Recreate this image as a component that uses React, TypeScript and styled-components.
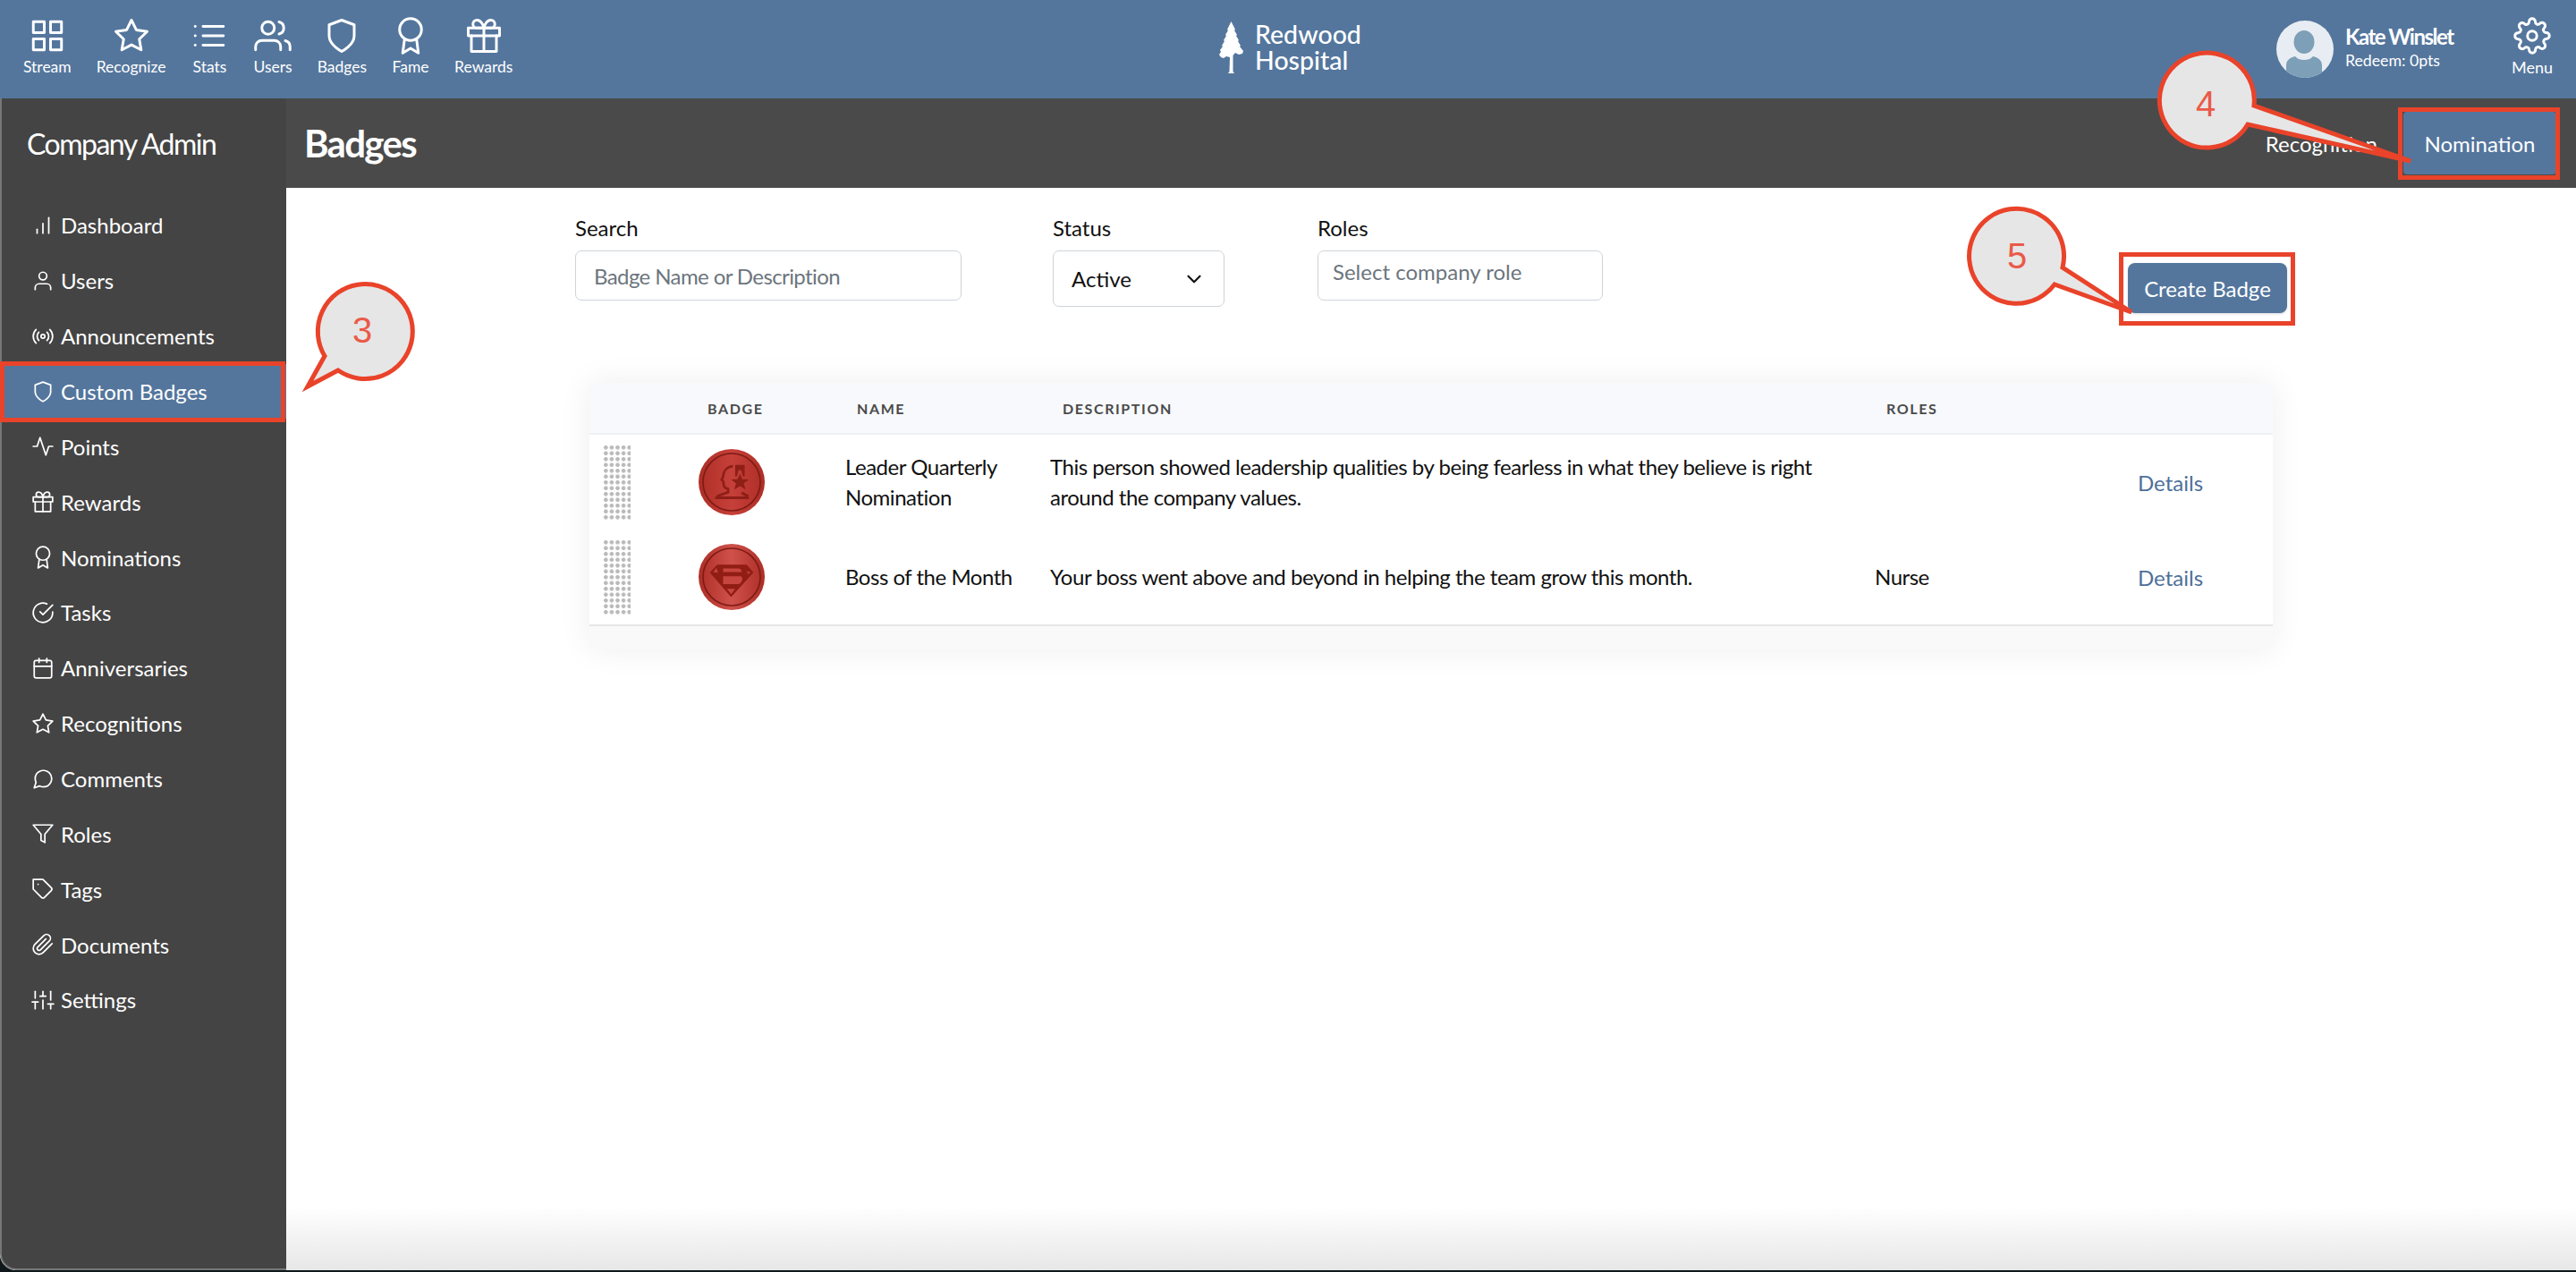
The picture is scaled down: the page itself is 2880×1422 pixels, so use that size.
import React from 'react';
import styled, { createGlobalStyle } from 'styled-components';
import {
    FiActivity,
    FiAward,
    FiBarChart,
    FiCalendar,
    FiCheckCircle,
    FiChevronDown,
    FiFilter,
    FiGift,
    FiGrid,
    FiList,
    FiMessageCircle,
    FiPaperclip,
    FiRadio,
    FiSettings,
    FiShield,
    FiSliders,
    FiStar,
    FiTag,
    FiUser,
    FiUsers
} from 'react-icons/fi';

const BLUE = '#54769d';
const RED = '#e9432a';

const GlobalStyle = createGlobalStyle`
    html, body {
        margin: 0;
        padding: 0;
        background: #10181c;
    }
    * {
        box-sizing: border-box;
    }
    body {
        font-family: Lato, "Open Sans", sans-serif;
    }
`;

const Window = styled.div`
    position: relative;
    display: flex;
    flex-direction: column;
    width: 2880px;
    height: 1420px;
    overflow: hidden;
    border-bottom-left-radius: 18px;
    background: #fff;
`;

const TopBar = styled.header`
    display: flex;
    align-items: flex-start;
    flex: 0 0 110px;
    padding-left: 26px;
    background: ${BLUE};
    color: #fff;
`;

const TopNav = styled.nav`
    display: flex;
    gap: 28px;
    width: 1337px;
`;

const TopItem = styled.a`
    display: flex;
    flex-direction: column;
    align-items: center;
    padding-top: 19px;
    font-size: 17.5px;
    line-height: 20px;

    svg {
        width: 42px;
        height: 42px;
        margin-bottom: 4px;
        stroke-width: 1.7;
    }
`;

const Logo = styled.div`
    display: flex;
    align-items: flex-start;
    gap: 12px;
    padding-top: 24px;
    width: 1182px;
`;

const LogoText = styled.div`
    font-size: 28.5px;
    font-weight: 500;
    line-height: 29px;
`;

const UserBlock = styled.div`
    display: flex;
    gap: 13px;
    padding-top: 23px;
    width: 263px;
`;

const Avatar = styled.svg`
    width: 64px;
    height: 64px;
`;

const UserName = styled.div`
    margin-top: 4px;
    font-size: 24px;
    font-weight: 700;
    line-height: 28px;
    letter-spacing: -1.5px;
`;

const Redeem = styled.div`
    margin-top: 1px;
    font-size: 17.7px;
    line-height: 24px;
`;

const MenuItem = styled(TopItem)`
    font-size: 18px;
`;

const Body = styled.div`
    display: flex;
    flex: 1;
    min-height: 0;
`;

const Sidebar = styled.aside`
    flex: 0 0 320px;
    border-left: 2px solid #777;
    border-bottom: 2px solid #777;
    border-bottom-left-radius: 18px;
    background: #444;
    color: #fff;
`;

const SideTitle = styled.div`
    display: flex;
    align-items: center;
    height: 100px;
    padding-left: 28px;
    font-size: 32px;
    letter-spacing: -1.5px;
`;

const SideNav = styled.nav`
    padding-top: 11px;
`;

const SideItem = styled.a<{ $active?: boolean }>`
    position: relative;
    display: flex;
    align-items: center;
    gap: 7px;
    height: 61.86px;
    padding-left: 33px;
    font-size: 24px;
    background: ${(p) => (p.$active ? BLUE : 'transparent')};

    svg {
        flex: none;
        width: 26px;
        height: 26px;
        stroke-width: 1.6;
    }

    ${(p) =>
        p.$active
            ? `&::after {
                content: '';
                position: absolute;
                inset: -3px 1px -4px -2px;
                border: 5px solid ${RED};
            }`
            : ''}
`;

const Main = styled.main`
    flex: 1;
    display: flex;
    flex-direction: column;
    min-width: 0;
`;

const PageHeader = styled.div`
    display: flex;
    align-items: center;
    flex: 0 0 100px;
    padding-left: 20px;
    background: #4a4a4a;
    color: #fff;
`;

const PageTitle = styled.h1`
    margin: 0;
    font-size: 42px;
    font-weight: 700;
    letter-spacing: -1.7px;
`;

const Tabs = styled.div`
    display: flex;
    align-items: center;
    margin-left: auto;
    margin-right: 22px;
    font-size: 24px;
`;

const Tab = styled.a<{ $active?: boolean }>`
    position: relative;
    display: flex;
    align-items: center;
    justify-content: center;
    height: 70px;
    width: ${(p) => (p.$active ? '171px' : 'auto')};
    margin-left: ${(p) => (p.$active ? '29px' : '0')};
    border-radius: 4px;
    background: ${(p) => (p.$active ? BLUE : 'transparent')};

    ${(p) =>
        p.$active
            ? `&::after {
                content: '';
                position: absolute;
                inset: -5px -4px -6px -6px;
                border: 5px solid ${RED};
            }`
            : ''}
`;

const Content = styled.div`
    flex: 1;
    padding: 29px 0 0 323px;
    background: linear-gradient(to bottom, #fff calc(100% - 72px), #e7e7e7 100%);
`;

const Filters = styled.div`
    display: flex;
    align-items: flex-start;
`;

const Field = styled.div<{ $width: number; $gap: number }>`
    width: ${(p) => p.$width}px;
    margin-right: ${(p) => p.$gap}px;
`;

const Label = styled.label`
    display: block;
    margin-bottom: 10px;
    padding-top: 1px;
    font-size: 24px;
    line-height: 30px;
    color: #111;
`;

const Input = styled.input<{ $inset?: number; $tight?: number }>`
    display: block;
    width: 100%;
    height: 56px;
    padding: 0 0 ${(p) => p.$inset ?? 0}px ${(p) => (p.$inset ? 16 : 20)}px;
    border: 1px solid #ced4da;
    border-radius: 7px;
    outline: none;
    font-family: inherit;
    font-size: 24px;
    letter-spacing: ${(p) => p.$tight ?? 0}px;
    color: #212529;

    &::placeholder {
        color: #6c757d;
        opacity: 1;
    }
`;

const SelectBox = styled.div`
    display: flex;
    align-items: center;
    justify-content: space-between;
    height: 63px;
    padding: 0 20px;
    border: 1px solid #ced4da;
    border-radius: 7px;
    font-size: 24px;
    color: #111;

    svg {
        width: 26px;
        height: 26px;
        stroke-width: 2;
    }
`;

const CreateButton = styled.button`
    position: relative;
    width: 178px;
    height: 56px;
    margin-top: 55px;
    border: 0;
    border-radius: 8px;
    background: ${BLUE};
    box-shadow: 0 1px 3px rgba(0, 0, 0, 0.15);
    font-family: inherit;
    font-size: 24px;
    color: #fff;

    &::after {
        content: '';
        position: absolute;
        inset: -12px -9px -14px -10px;
        border: 5px solid ${RED};
    }
`;

const Table = styled.section`
    width: 1882px;
    margin: 78px 0 0 16px;
    border-radius: 4px;
    background: #fff;
    box-shadow: 0 0 36px rgba(0, 0, 0, 0.07);
`;

const HeadRow = styled.div`
    display: grid;
    grid-template-columns: 132px 167px 230px 921px 1fr;
    align-items: center;
    height: 58px;
    border-bottom: 2px solid #eef0f3;
    background: #f7f9fc;
`;

const HeadCell = styled.div`
    font-size: 16px;
    font-weight: 700;
    letter-spacing: 1.6px;
    color: #4a4a4a;
`;

const Row = styled.div`
    display: grid;
    grid-template-columns: 122px 164px 229px 922px 294px 151px;
    align-items: center;
    height: 106px;
`;

const Cell = styled.div`
    font-size: 24px;
    line-height: 34px;
    letter-spacing: -0.48px;
    color: #111;
`;

const DragHandle = styled.div`
    width: 31px;
    height: 85px;
    margin-left: 15px;
    background-image: radial-gradient(circle, #b9b9b9 2px, transparent 2.4px);
    background-size: 6.6px 6.5px;
`;

const BadgeIcon = styled.svg`
    display: block;
    width: 74px;
    height: 74px;
`;

const DetailsLink = styled.a`
    font-size: 24px;
    color: #4d7099;
`;

const TableFooter = styled.div`
    height: 28px;
    border-top: 2px solid #e6e6e6;
    background: #f9f9f9;
`;

const CalloutSvg = styled.svg<{ $x: number; $y: number }>`
    position: absolute;
    left: ${(p) => p.$x}px;
    top: ${(p) => p.$y}px;
    overflow: visible;
`;

const CalloutNumber = styled.text`
    font-family: "Liberation Sans", Arial, sans-serif;
    font-size: 40px;
    fill: #ea5a48;
    text-anchor: middle;
`;

type CalloutProps = {
    label: string;
    x: number;
    y: number;
    width: number;
    height: number;
    d: string;
    textX: number;
    textY: number;
};

// speech bubble over the page, path is in window pixels minus x/y
const Callout: React.FC<CalloutProps> = ({ label, x, y, width, height, d, textX, textY }) => (
    <CalloutSvg $x={x} $y={y} width={width} height={height} viewBox={`0 0 ${width} ${height}`}>
        <path d={d} fill="#e6e6e6" stroke={RED} strokeWidth="5" strokeLinejoin="miter" />
        <CalloutNumber x={textX} y={textY}>
            {label}
        </CalloutNumber>
    </CalloutSvg>
);

const topLinks = [
    { label: 'Stream', icon: FiGrid },
    { label: 'Recognize', icon: FiStar },
    { label: 'Stats', icon: FiList },
    { label: 'Users', icon: FiUsers },
    { label: 'Badges', icon: FiShield },
    { label: 'Fame', icon: FiAward },
    { label: 'Rewards', icon: FiGift }
];

const sideLinks = [
    { label: 'Dashboard', icon: FiBarChart },
    { label: 'Users', icon: FiUser },
    { label: 'Announcements', icon: FiRadio },
    { label: 'Custom Badges', icon: FiShield, active: true },
    { label: 'Points', icon: FiActivity },
    { label: 'Rewards', icon: FiGift },
    { label: 'Nominations', icon: FiAward },
    { label: 'Tasks', icon: FiCheckCircle },
    { label: 'Anniversaries', icon: FiCalendar },
    { label: 'Recognitions', icon: FiStar },
    { label: 'Comments', icon: FiMessageCircle },
    { label: 'Roles', icon: FiFilter },
    { label: 'Tags', icon: FiTag },
    { label: 'Documents', icon: FiPaperclip },
    { label: 'Settings', icon: FiSliders }
];

const TreeLogo = () => (
    <svg width="28" height="58" viewBox="0 0 28 58" fill="#fff">
        <path d="M13.5 0L16 5L18 9L17 10L20 15L19 16L22 21L21 22L24 27L23 28L27 33L26 36L22 37L18 35L15.5 38L15.500 56L17 58L10 58L11.500 56L12 40L8 39L5 41L2 40L0 37L2 34L1 32L4 28L3 27L6 22L5 21L8 16L7 15L10 10L9 9Z" />
    </svg>
);

const AvatarIcon = () => (
    <Avatar viewBox="0 0 64 64">
        <defs>
            <clipPath id="avatarClip">
                <circle cx="32" cy="32" r="32" />
            </clipPath>
        </defs>
        <circle cx="32" cy="32" r="32" fill="#e8edf3" />
        <g clipPath="url(#avatarClip)" fill="#7d9fb7">
            <ellipse cx="31" cy="24" rx="11.500" ry="13" />
            <path d="M11 64V50c0-6 5-9 10-10 3 3 6 4 10 4s7-1 10-4c5 1 10 4 10 10v14z" />
        </g>
    </Avatar>
);

const BadgeBase: React.FC<{ id: string; light: string; children: React.ReactNode }> = ({
    id,
    light,
    children
}) => (
    <BadgeIcon viewBox="0 0 224 224">
        <defs>
            <linearGradient id={id} x1="0" x2="1" y1="0" y2="0">
                <stop offset="0" stopColor="#ad2e26" />
                <stop offset="0.5" stopColor={light} />
                <stop offset="1" stopColor="#ad2e26" />
            </linearGradient>
        </defs>
        <circle cx="112" cy="112" r="112" fill={`url(#${id})`} />
        <circle cx="112" cy="112" r="97" fill="none" stroke="#7e1b14" strokeWidth="5" />
        {children}
    </BadgeIcon>
);

const LeaderBadge = () => (
    <BadgeBase id="leaderGrad" light="#c6403a">
        <path
            d="M116 58C96 60 84 74 83 94L78 104L84 110L85 122C87 130 92 134 100 135L100 146L62 160"
            fill="none"
            stroke="#8d1f17"
            strokeWidth="8"
        />
        <path d="M146 148L168 160M56 165H170" fill="none" stroke="#8d1f17" strokeWidth="9" />
        <g fill="#8d1f17">
            <path d="M124 54H156V92H150L146 76C144 70 136 70 134 76L130 92H124Z" />
            <path d="M140 84L148 102L170 103L153 116L159 137L140 125L121 137L127 116L110 103L132 102Z" />
        </g>
    </BadgeBase>
);

const BossBadge = () => (
    <BadgeBase id="bossGrad" light="#cf514b">
        <path fill="#911d15" d="M63 70H163L186 97L110 180L38 97Z" />
        <g fill="#c6463f">
            <path d="M83 83H136C142 83 146 90 146 95H83Z" />
            <path d="M83 110H140C146 110 149 114 148 120C146 130 140 136 132 136H83Z" />
            <path d="M96 152H124L110 170Z" />
            <path d="M163 92L176 96L168 102Z" />
            <path d="M60 82L50 96L66 97Z" />
        </g>
    </BadgeBase>
);

export default function App() {
    return (
        <Window>
            <GlobalStyle />
            <TopBar>
                <TopNav>
                    {topLinks.map(({ label, icon: Icon }) => (
                        <TopItem key={label}>
                            <Icon />
                            {label}
                        </TopItem>
                    ))}
                </TopNav>
                <Logo>
                    <TreeLogo />
                    <LogoText>
                        Redwood
                        <br />
                        Hospital
                    </LogoText>
                </Logo>
                <UserBlock>
                    <AvatarIcon />
                    <div>
                        <UserName>Kate Winslet</UserName>
                        <Redeem>Redeem: 0pts</Redeem>
                    </div>
                </UserBlock>
                <MenuItem>
                    <FiSettings />
                    Menu
                </MenuItem>
            </TopBar>
            <Body>
                <Sidebar>
                    <SideTitle>Company Admin</SideTitle>
                    <SideNav>
                        {sideLinks.map(({ label, icon: Icon, active }) => (
                            <SideItem key={label} $active={active}>
                                <Icon />
                                {label}
                            </SideItem>
                        ))}
                    </SideNav>
                </Sidebar>
                <Main>
                    <PageHeader>
                        <PageTitle>Badges</PageTitle>
                        <Tabs>
                            <Tab>Recognition</Tab>
                            <Tab $active>Nomination</Tab>
                        </Tabs>
                    </PageHeader>
                    <Content>
                        <Filters>
                            <Field $width={432} $gap={102}>
                                <Label>Search</Label>
                                <Input $tight={-0.6} placeholder="Badge Name or Description" />
                            </Field>
                            <Field $width={192} $gap={104}>
                                <Label>Status</Label>
                                <SelectBox>
                                    Active
                                    <FiChevronDown />
                                </SelectBox>
                            </Field>
                            <Field $width={319} $gap={587}>
                                <Label>Roles</Label>
                                <Input $inset={9} placeholder="Select company role" />
                            </Field>
                            <CreateButton>Create Badge</CreateButton>
                        </Filters>
                        <Table>
                            <HeadRow>
                                <span />
                                <HeadCell>BADGE</HeadCell>
                                <HeadCell>NAME</HeadCell>
                                <HeadCell>DESCRIPTION</HeadCell>
                                <HeadCell>ROLES</HeadCell>
                            </HeadRow>
                            <Row>
                                <DragHandle />
                                <LeaderBadge />
                                <Cell>
                                    Leader Quarterly
                                    <br />
                                    Nomination
                                </Cell>
                                <Cell>
                                    This person showed leadership qualities by being fearless in what they believe is right
                                    <br />
                                    around the company values.
                                </Cell>
                                <Cell />
                                <DetailsLink>Details</DetailsLink>
                            </Row>
                            <Row>
                                <DragHandle />
                                <BossBadge />
                                <Cell>Boss of the Month</Cell>
                                <Cell>Your boss went above and beyond in helping the team grow this month.</Cell>
                                <Cell>Nurse</Cell>
                                <DetailsLink>Details</DetailsLink>
                            </Row>
                            <TableFooter />
                        </Table>
                    </Content>
                </Main>
            </Body>
            <Callout
                label="3"
                x={338}
                y={311}
                width={126}
                height={126}
                d="M25 87 A53 53 0 1 1 40 103 L6 121 Z"
                textX={67}
                textY={72}
            />
            <Callout
                label="4"
                x={2410}
                y={59}
                width={290}
                height={125}
                d="M110 59 A53 53 0 1 0 103 80 L285 121 Z"
                textX={56}
                textY={71}
            />
            <Callout
                label="5"
                x={2199}
                y={230}
                width={190}
                height={125}
                d="M107 69 A53 53 0 1 0 98 88 L184 119 Z"
                textX={56}
                textY={70}
            />
        </Window>
    );
}
